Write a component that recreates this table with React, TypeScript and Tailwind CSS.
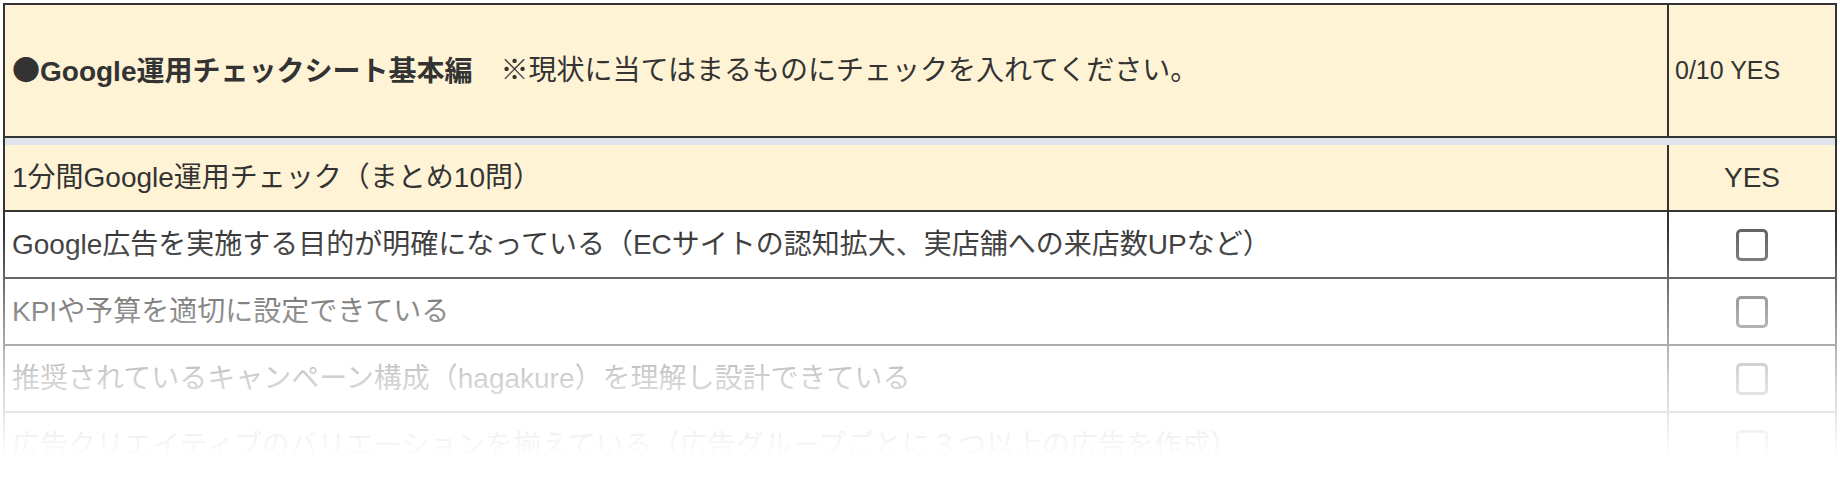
import React from 'react';

const ITEMS: string[] = [
  'Google広告を実施する目的が明確になっている（ECサイトの認知拡大、実店舗への来店数UPなど）',
  'KPIや予算を適切に設定できている',
  '推奨されているキャンペーン構成（hagakure）を理解し設計できている',
  '広告クリエイティブのバリエーションを揃えている（広告グループごとに３つ以上の広告を作成）',
];

function CheckBox() {
  return <span className="block w-8 h-8 rounded-[5px] border-[3px] border-[#646464] bg-white" />;
}

export default function App() {
  return (
    <div
      className="relative h-[500px] overflow-hidden bg-white text-[#333] text-[28px] leading-none"
      style={{ fontFamily: '"Liberation Sans", "Noto Sans CJK JP", sans-serif' }}
    >
      <div className="m-[3px] border-2 border-[#333]">
        {/* Title row */}
        <div className="flex h-[133px] bg-[#fff3d6] border-b-2 border-[#333]">
          <div className="flex-1 flex items-center pl-[7px]">
            <span className="font-bold">
              <span style={{ fontFamily: '"Noto Sans CJK JP", sans-serif' }}>●</span>Google運用チェックシート基本編
            </span>
            <span>　※現状に当てはまるものにチェックを入れてください。</span>
          </div>
          <div className="w-[168px] flex items-center pl-[6px] border-l-2 border-[#333] text-[25px]">
            0/10 YES
          </div>
        </div>

        {/* Spacer band */}
        <div className="h-[7px] bg-[#e0e5ed]" />

        {/* Sub header */}
        <div className="flex h-[67px] bg-[#fff3d6] border-b-2 border-[#333]">
          <div className="flex-1 flex items-center pl-[7px]">1分間Google運用チェック（まとめ10問）</div>
          <div className="w-[168px] flex items-center justify-center border-l-2 border-[#333]">YES</div>
        </div>

        {ITEMS.map((text, i) => (
          <div key={i} className="flex h-[67px] border-b-2 border-[#333]">
            <div className="flex-1 flex items-center pl-[7px]">{text}</div>
            <div className="w-[168px] flex items-center justify-center border-l-2 border-[#333]">
              <CheckBox />
            </div>
          </div>
        ))}
      </div>

      {/* Fade-out over the lower rows */}
      <div className="pointer-events-none absolute inset-x-0 top-[230px] bottom-0 bg-[linear-gradient(to_bottom,rgba(255,255,255,0)_0px,rgba(255,255,255,0.45)_85px,rgba(255,255,255,0.78)_150px,rgba(255,255,255,1)_228px)]" />
    </div>
  );
}
